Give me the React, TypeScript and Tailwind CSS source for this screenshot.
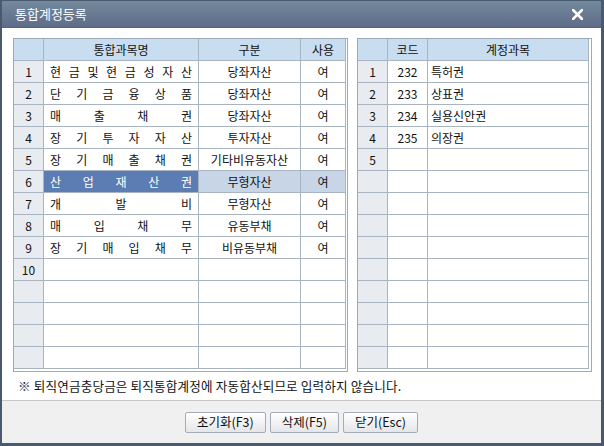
import React from 'react';

type AccountRow = {
  no: string;
  name: string;
  kind: string;
  use: string;
};

const accounts: AccountRow[] = [
  { no: '1', name: '현금및현금성자산', kind: '당좌자산', use: '여' },
  { no: '2', name: '단기금융상품', kind: '당좌자산', use: '여' },
  { no: '3', name: '매출채권', kind: '당좌자산', use: '여' },
  { no: '4', name: '장기투자자산', kind: '투자자산', use: '여' },
  { no: '5', name: '장기매출채권', kind: '기타비유동자산', use: '여' },
  { no: '6', name: '산업재산권', kind: '무형자산', use: '여' },
  { no: '7', name: '개발비', kind: '무형자산', use: '여' },
  { no: '8', name: '매입채무', kind: '유동부채', use: '여' },
  { no: '9', name: '장기매입채무', kind: '비유동부채', use: '여' },
  { no: '10', name: '', kind: '', use: '' },
  { no: '', name: '', kind: '', use: '' },
  { no: '', name: '', kind: '', use: '' },
  { no: '', name: '', kind: '', use: '' },
  { no: '', name: '', kind: '', use: '' },
];

const details = [
  { no: '1', code: '232', name: '특허권' },
  { no: '2', code: '233', name: '상표권' },
  { no: '3', code: '234', name: '실용신안권' },
  { no: '4', code: '235', name: '의장권' },
  { no: '5', code: '', name: '' },
  { no: '', code: '', name: '' },
  { no: '', code: '', name: '' },
  { no: '', code: '', name: '' },
  { no: '', code: '', name: '' },
  { no: '', code: '', name: '' },
  { no: '', code: '', name: '' },
  { no: '', code: '', name: '' },
  { no: '', code: '', name: '' },
  { no: '', code: '', name: '' },
];

const SELECTED = 5;

const cellBase = 'h-[22px] border-r border-b border-[#a9b4c2] flex items-center';
const headCell = `${cellBase} justify-center bg-[#c9ddf1] text-[#111]`;
const noCell = `${cellBase} justify-center bg-[#e8ebf0]`;

// spreads each character across the cell width
const Spread = ({ text }: { text: string }) => (
  <div className="flex w-full justify-between">
    {text.split('').map((ch, i) => (
      <span key={i}>{ch}</span>
    ))}
  </div>
);

const Button = ({ label }: { label: string }) => (
  <button className="h-[21px] rounded-[2px] border border-[#a3adba] bg-gradient-to-b from-white to-[#e4e6e9] px-[11px] text-[12.5px] leading-none text-[#111]">
    {label}
  </button>
);

export default function App() {
  return (
    <div
      className="flex h-[446px] w-[604px] flex-col overflow-hidden border-t border-l-2 border-r-[3px] border-b-[3px] border-[#4a5a6e] bg-white text-[12px] text-[#111]"
      style={{ fontFamily: '"Noto Sans CJK KR", "Noto Sans", sans-serif' }}
    >
      {/* title bar */}
      <div className="flex h-[27px] items-center justify-between border-b border-[#56637a] bg-gradient-to-b from-[#738a9c] to-[#5f6c89] pl-[13px] pr-[18px]">
        <span className="text-[13px] text-white">통합계정등록</span>
        <svg width="11" height="11" viewBox="0 0 11 11">
          <path d="M1 1 L10 10 M10 1 L1 10" stroke="white" strokeWidth="2.6" strokeLinecap="square" />
        </svg>
      </div>

      <div className="flex-1 pl-[11px] pt-[10px]">
        <div className="flex gap-[9px]">
          {/* account groups */}
          <div className="w-[335px] border border-[#9ea9b7] pr-[2px] pb-[2px]">
            <div className="grid grid-cols-[30px_155px_102px_45px]">
              <div className={headCell} />
              <div className={headCell}>통합과목명</div>
              <div className={headCell}>구분</div>
              <div className={headCell}>사용</div>
              {accounts.map((row, i) => {
                const sel = i === SELECTED;
                return (
                  <React.Fragment key={i}>
                    <div className={noCell}>{row.no}</div>
                    <div className={`${cellBase} px-[6px] ${sel ? 'bg-[#5b7db4] text-white' : ''}`}>
                      <Spread text={row.name} />
                    </div>
                    <div className={`${cellBase} justify-center ${sel ? 'bg-[#c7d5e6]' : ''}`}>{row.kind}</div>
                    <div className={`${cellBase} justify-center ${sel ? 'bg-[#c7d5e6]' : ''}`}>{row.use}</div>
                  </React.Fragment>
                );
              })}
            </div>
          </div>

          {/* linked accounts */}
          <div className="w-[235px] border border-[#9ea9b7] pr-[2px] pb-[2px]">
            <div className="grid grid-cols-[30px_40px_161px]">
              <div className={headCell} />
              <div className={headCell}>코드</div>
              <div className={headCell}>계정과목</div>
              {details.map((row, i) => (
                <React.Fragment key={i}>
                  <div className={noCell}>{row.no}</div>
                  <div className={`${cellBase} justify-center`}>{row.code}</div>
                  <div className={`${cellBase} pl-[3px]`}>{row.name}</div>
                </React.Fragment>
              ))}
            </div>
          </div>
        </div>

        <p className="mt-[6px] pl-[5px] text-[12.6px] leading-[16px] tracking-[0.15px]">
          ※ 퇴직연금충당금은 퇴직통합계정에 자동합산되므로 입력하지 않습니다.
        </p>
      </div>

      {/* footer buttons */}
      <div className="flex h-[43px] justify-center gap-[4px] border-t border-[#c8c8c8] bg-[#f0f0f0] pt-[11px]">
        <Button label="초기화(F3)" />
        <Button label="삭제(F5)" />
        <Button label="닫기(Esc)" />
      </div>
    </div>
  );
}
